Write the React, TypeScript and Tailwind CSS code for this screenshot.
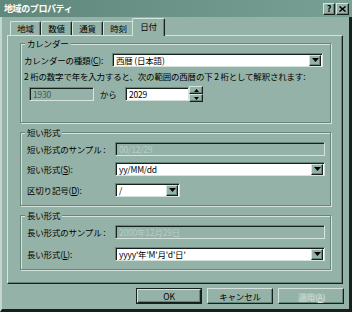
const FACE = "bg-[#94b2a7]";

function Raised({ className = "", children }: { className?: string; children?: React.ReactNode }) {
  return (
    <div
      className={`flex items-center justify-center border border-t-[#d6e4de] border-l-[#d6e4de] border-r-[#17201d] border-b-[#17201d] shadow-[inset_-1px_-1px_0_#66857b] ${FACE} ${className}`}
    >
      {children}
    </div>
  );
}

function Field({
  className = "",
  disabled = false,
  children,
}: {
  className?: string;
  disabled?: boolean;
  children?: React.ReactNode;
}) {
  const tone = disabled ? `${FACE} text-[#b9ccc5]` : "bg-white text-black";
  return (
    <div
      className={`flex h-[14px] items-center border border-t-[#66857b] border-l-[#66857b] border-r-[#d6e4de] border-b-[#d6e4de] shadow-[inset_1px_1px_0_#17201d] pl-[3px] leading-none ${tone} ${className}`}
    >
      {children}
    </div>
  );
}

function Combo({ className = "", children }: { className?: string; children?: React.ReactNode }) {
  return (
    <Field className={`justify-between pr-[1px] ${className}`}>
      <span className="whitespace-nowrap">{children}</span>
      <Raised className="h-[11px] w-[12px] shrink-0">
        <svg width="7" height="4" viewBox="0 0 7 4">
          <path d="M0 0h7L3.5 4z" fill="#000" />
        </svg>
      </Raised>
    </Field>
  );
}

function Group({ title, className = "", children }: { title: string; className?: string; children?: React.ReactNode }) {
  return (
    <div
      className={`relative w-[311px] border border-[#66857b] shadow-[inset_1px_1px_0_#d6e4de,1px_1px_0_#d6e4de] ${className}`}
    >
      <span className={`absolute left-[4px] top-[-6px] px-[2px] leading-[10px] ${FACE}`}>{title}</span>
      {children}
    </div>
  );
}

function Key({ k }: { k: string }) {
  return (
    <>
      (<span className="underline underline-offset-1">{k}</span>):
    </>
  );
}

function Row({ label, children }: { label: React.ReactNode; children?: React.ReactNode }) {
  return (
    <div className="flex items-center">
      <span className="w-[88px] shrink-0 whitespace-nowrap">{label}</span>
      {children}
    </div>
  );
}

function Tab({ label, active = false }: { label: string; active?: boolean }) {
  return (
    <div
      className={`flex items-center justify-center rounded-t-[2px] border-t border-l border-r border-t-[#d6e4de] border-l-[#d6e4de] border-r-[#17201d] shadow-[inset_-1px_0_0_#66857b] ${FACE} ${
        active ? "relative z-10 -mx-[2px] -mb-[1px] h-[18px] w-[33px] pb-[2px]" : "h-[14px] w-[31px]"
      }`}
    >
      {label}
    </div>
  );
}

export default function App() {
  return (
    <div
      className={`flex h-[312px] w-[352px] flex-col overflow-hidden font-['Noto_Sans_CJK_JP','Noto_Sans',sans-serif] text-[8.5px] tracking-[-0.2px] text-black ${FACE}`}
    >
      {/* title bar */}
      <div className="flex h-[17px] shrink-0 items-center justify-between bg-gradient-to-r from-[#5f877b] to-[#79a094] pl-[4px] pr-[3px]">
        <span className="text-[9px] font-bold tracking-[-0.4px] text-white">地域のプロパティ</span>
        <div className="flex gap-[1px]">
          <Raised className="h-[12px] w-[12px] text-[9px] font-bold leading-none">?</Raised>
          <Raised className="h-[12px] w-[13px]">
            <svg width="7" height="6" viewBox="0 0 7 6">
              <path d="M0.5 0.5l6 5M6.5 0.5l-6 5" stroke="#000" strokeWidth="1.5" />
            </svg>
          </Raised>
        </div>
      </div>

      <div className="flex flex-1 flex-col border-b-[3px] border-l-2 border-r-[3px] border-b-[#17201d] border-l-[#c4d7cf] border-r-[#17201d] px-[5px]">
        {/* tabs */}
        <div className="mt-[2px] flex h-[16px] items-end pl-[3px]">
          <Tab label="地域" />
          <Tab label="数値" />
          <Tab label="通貨" />
          <Tab label="時刻" />
          <Tab label="日付" active />
        </div>

        {/* panel */}
        <div className="flex h-[249px] w-[336px] flex-col border border-t-[#d6e4de] border-l-[#d6e4de] border-r-[#17201d] border-b-[#17201d] pl-[12px] pt-[7px] shadow-[inset_-1px_-1px_0_#66857b]">
          <Group title="カレンダー" className="h-[80px]">
            <div className="mt-[9px] flex flex-col pl-[3px]">
              <Row
                label={
                  <>
                    カレンダーの種類<Key k="C" />
                  </>
                }
              >
                <Combo className="w-[211px]">西暦 (日本語)</Combo>
              </Row>
              <div className="mt-[5px] h-[9px] whitespace-nowrap leading-[9px]">
                2 桁の数字で年を入力すると、次の範囲の西暦の下 2 桁として解釈されます:
              </div>
              <div className="mt-[5px] flex items-center pl-[5px]">
                <Field disabled className="w-[65px]">
                  <span className="text-[#465a53]">1930</span>
                </Field>
                <span className="ml-[6px] w-[25px]">から</span>
                <Field className="w-[64px]">2029</Field>
                <div className="flex h-[16px] w-[14px] flex-col">
                  <Raised className="h-[8px] w-[14px]">
                    <svg width="5" height="3" viewBox="0 0 5 3">
                      <path d="M0 3h5L2.5 0z" fill="#000" />
                    </svg>
                  </Raised>
                  <Raised className="h-[8px] w-[14px]">
                    <svg width="5" height="3" viewBox="0 0 5 3">
                      <path d="M0 0h5L2.5 3z" fill="#000" />
                    </svg>
                  </Raised>
                </div>
              </div>
            </div>
          </Group>

          <Group title="短い形式" className="mt-[9px] h-[74px]">
            <div className="mt-[9px] flex flex-col gap-[6px] pl-[6px]">
              <Row label="短い形式のサンプル :">
                <Field disabled className="w-[210px]">00/12/29</Field>
              </Row>
              <Row
                label={
                  <>
                    短い形式<Key k="S" />
                  </>
                }
              >
                <Combo className="w-[210px]">yy/MM/dd</Combo>
              </Row>
              <div className="mt-[1px]">
                <Row
                  label={
                    <>
                      区切り記号<Key k="D" />
                    </>
                  }
                >
                  <Combo className="w-[65px]">/</Combo>
                </Row>
              </div>
            </div>
          </Group>

          <Group title="長い形式" className="mt-[9px] h-[55px]">
            <div className="mt-[9px] flex flex-col gap-[8px] pl-[6px]">
              <Row label="長い形式のサンプル :">
                <Field disabled className="w-[210px]">2000年12月29日</Field>
              </Row>
              <Row
                label={
                  <>
                    長い形式<Key k="L" />
                  </>
                }
              >
                <Combo className="w-[210px]">yyyy'年'M'月'd'日'</Combo>
              </Row>
            </div>
          </Group>
        </div>

        {/* buttons */}
        <div className="mt-[4px] flex justify-end gap-[5px]">
          <div className="border border-[#17201d]">
            <Raised className="h-[14px] w-[64px]">OK</Raised>
          </div>
          <Raised className="h-[16px] w-[66px]">キャンセル</Raised>
          <Raised className="h-[16px] w-[66px] text-[#b9ccc5] [text-shadow:1px_1px_0_#d6e4de]">
            <span>
              適用(<span className="underline">A</span>)
            </span>
          </Raised>
        </div>
      </div>
    </div>
  );
}
